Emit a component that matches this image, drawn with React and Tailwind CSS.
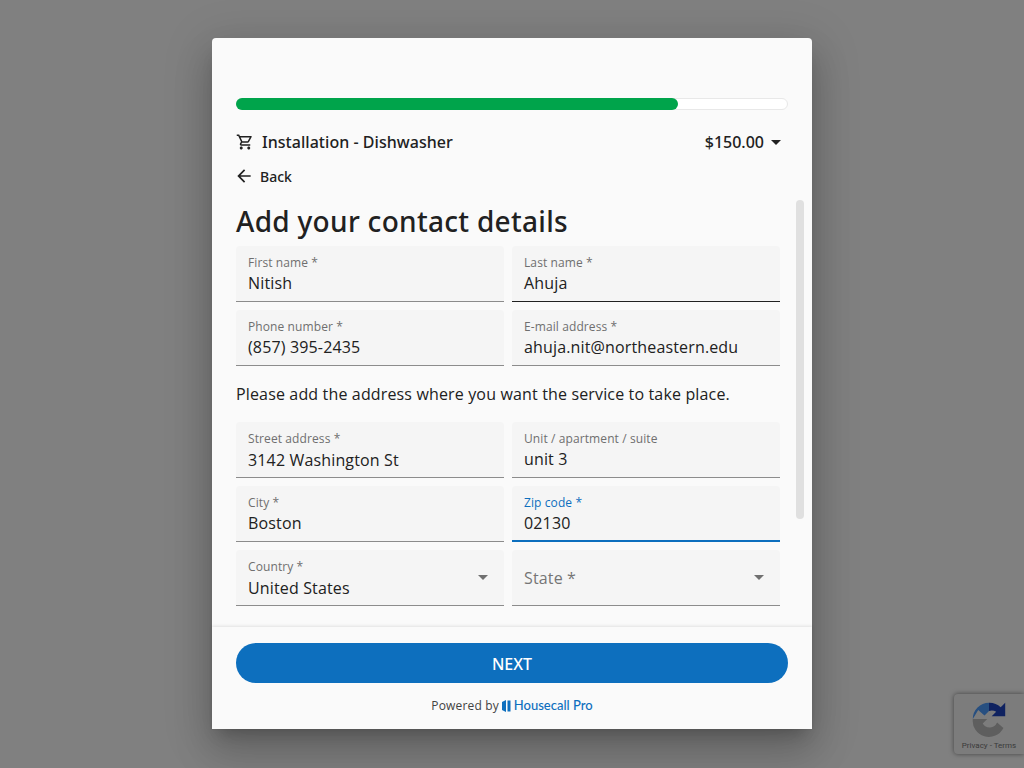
function Field({ label, value, focused, hovered, lower }) {
    return (
        <div
            className={`h-14 rounded-t bg-[#f5f5f5] px-3 pt-2 border-b ${
                focused ? "border-b-2 border-[#0d6fbe]" : hovered ? "border-[#212121]" : "border-[#8c8c8c]"
            }`}
        >
            <div className={`text-xs leading-[17px] tracking-[0.1px] ${focused ? "text-[#0d6fbe]" : "text-[#6f6f6f]"}`}>{label}</div>
            <div className={`text-base leading-[24px] tracking-[0.15px] text-[#212121] ${lower ? "pt-px" : ""}`}>{value}</div>
        </div>
    );
}

function Caret({ color }) {
    return <div className={`w-0 h-0 border-x-[5px] border-x-transparent border-t-[5px] ${color}`} />;
}

function SelectField({ label, value }) {
    return (
        <div className="h-14 rounded-t bg-[#f5f5f5] pl-3 pr-4 border-b border-[#8c8c8c] flex items-center justify-between">
            {value ? (
                <div className="self-start pt-2">
                    <div className="text-xs leading-[17px] tracking-[0.1px] text-[#6f6f6f]">{label}</div>
                    <div className="pt-px text-base leading-[24px] tracking-[0.15px] text-[#212121]">{value}</div>
                </div>
            ) : (
                <div className="text-base tracking-[0.15px] text-[#757575]">{label}</div>
            )}
            <Caret color="border-t-[#707070]" />
        </div>
    );
}

export default function App() {
    return (
        <div className="relative h-[768px] w-[1024px] overflow-hidden bg-[#808080] flex justify-center pt-[38px] font-['Open_Sans','Noto_Sans',sans-serif]">
            <div className="w-[600px] h-[691px] rounded bg-[#fafafa] flex flex-col shadow-[0_11px_15px_-7px_rgba(0,0,0,0.2),0_24px_38px_3px_rgba(0,0,0,0.14),0_9px_46px_8px_rgba(0,0,0,0.12)]">
                <div className="px-6 pt-[60px]">
                    <div className="h-3 rounded-full border border-[#e8e8e8] bg-white">
                        <div className="-m-px h-3 w-[442px] rounded-full bg-[#00a44b]" />
                    </div>
                    <div className="mt-[20px] h-6 flex items-center justify-between pr-[7px]">
                        <div className="flex items-center gap-[8px]">
                            <svg width="18" height="18" viewBox="0 0 24 24" fill="#212121">
                                <path d="M15.55 13c.75 0 1.41-.41 1.75-1.03l3.58-6.49A.996.996 0 0 0 20.01 4H5.21l-.94-2H1v2h2l3.6 7.59-1.35 2.44C4.52 15.37 5.48 17 7 17h12v-2H7l1.1-2h7.45zM6.16 6h12.15l-2.76 5H8.53L6.16 6zM7 18c-1.1 0-1.99.9-1.99 2S5.9 22 7 22s2-.9 2-2-.9-2-2-2zm10 0c-1.1 0-1.99.9-1.99 2s.89 2 1.99 2 2-.9 2-2-.9-2-2-2z" />
                            </svg>
                            <span className="font-['Noto_Sans',sans-serif] text-base font-medium tracking-[0.04px] text-[#212121]">Installation - Dishwasher</span>
                        </div>
                        <div className="flex items-center gap-[7px]">
                            <span className="font-['Noto_Sans',sans-serif] text-base font-medium text-[#212121]">$150.00</span>
                            <Caret color="border-t-[#212121]" />
                        </div>
                    </div>
                    <div className="mt-[12px] h-[22px] flex items-center gap-[6px] -ml-[2px]">
                        <svg className="-mt-[2px]" width="20" height="20" viewBox="0 0 24 24" fill="#212121">
                            <path d="M20 11H7.83l5.59-5.59L12 4l-8 8 8 8 1.41-1.41L7.83 13H20v-2z" />
                        </svg>
                        <span className="font-['Noto_Sans',sans-serif] text-sm font-medium text-[#212121]">Back</span>
                    </div>
                </div>
                <div className="relative mt-3 h-[427px] overflow-hidden px-6">
                    <div className="h-[46px] font-['Noto_Sans',sans-serif] text-[28px] leading-[42px] font-medium tracking-[0.3px] text-[#212121]">Add your contact details</div>
                    <div className="w-[544px] grid grid-cols-2 gap-2">
                        <Field label="First name *" value="Nitish" />
                        <Field label="Last name *" value="Ahuja" hovered />
                        <Field label="Phone number *" value="(857) 395-2435" />
                        <Field label="E-mail address *" value="ahuja.nit@northeastern.edu" />
                    </div>
                    <p className="h-14 pt-4 text-base leading-[24px] tracking-[0.15px] text-[#212121]">
                        Please add the address where you want the service to take place.
                    </p>
                    <div className="w-[544px] grid grid-cols-2 gap-2">
                        <Field label="Street address *" value="3142 Washington St" lower />
                        <Field label="Unit / apartment / suite" value="unit 3" />
                        <Field label="City *" value="Boston" />
                        <Field label="Zip code *" value="02130" focused />
                        <SelectField label="Country *" value="United States" />
                        <SelectField label="State *" />
                    </div>
                    <div className="absolute right-2 top-0 h-[319px] w-2 rounded-sm bg-[#e0e0e0]" />
                </div>
                <div className="flex-1 px-6 pt-4 bg-[#fafafa] shadow-[0_-1px_3px_rgba(0,0,0,0.1)]">
                    <div className="h-10 pt-px rounded-full bg-[#0d6fbe] flex items-center justify-center font-['Noto_Sans',sans-serif] text-base font-medium text-white">NEXT</div>
                    <div className="mt-[13px] h-[18px] pt-px flex items-center justify-center gap-[3px] text-xs tracking-[0.15px] text-[#424242]">
                        <span>Powered by</span>
                        <svg width="9" height="12" viewBox="0 0 9 12" fill="#0d6fbe">
                            <path d="M0 2l4-2v12l-4-2z" />
                            <path d="M5.5 0.5H8.5V11.5H5.5z" />
                        </svg>
                        <span className="text-[13px] tracking-normal font-medium text-[#0d6fbe] font-['Lato',sans-serif]">Housecall Pro</span>
                    </div>
                </div>
            </div>
            <div className="absolute left-[954px] top-[694px] w-[70px] h-[60px] rounded-l bg-[#7c7c7c] shadow-[0_0_5px_rgba(0,0,0,0.5)] flex flex-col items-center">
                <svg className="mt-[7px]" width="36" height="36" viewBox="0 0 40 40">
                    <path d="M2 20A18 18 0 0 1 20 2V11L15 16L8 10z" fill="#274f80" />
                    <path d="M20 2A18 18 0 0 1 33 7L38 2V17H23L28 12A9 9 0 0 0 20 11z" fill="#0f2260" />
                    <path d="M2 20H18L13 25A9 9 0 0 0 29 24L36 30A18 18 0 0 1 2 20z" fill="#5e5e5e" />
                </svg>
                <div className="mt-[4px] text-[8px] leading-[10px] text-[#3a3a3a] font-['Roboto',sans-serif]">Privacy - Terms</div>
            </div>
        </div>
    );
}
